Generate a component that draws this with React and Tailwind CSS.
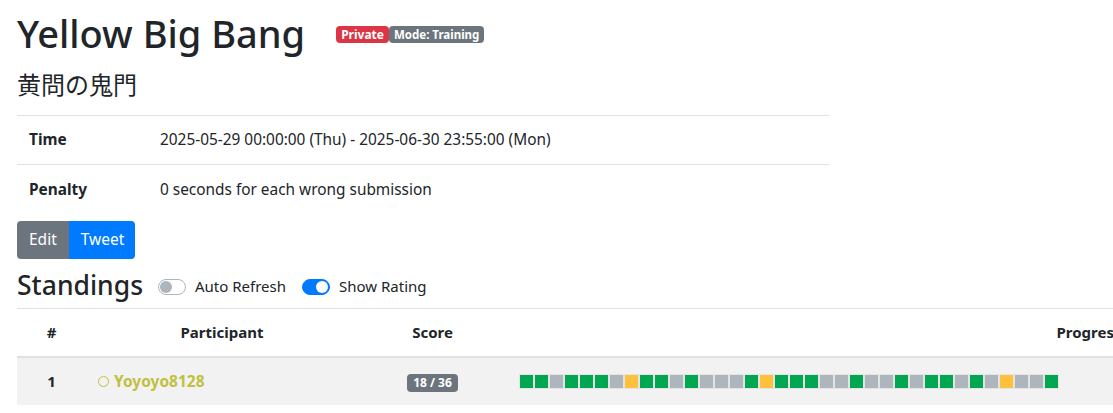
import React from 'react';

const progress = 'GGaGGGaYGGaGaaaGYGGGaaGaaGaGGaGaYaaG'.split('');

const squareColor = {
  G: 'bg-[#00a650]',
  a: 'bg-[#adb5bd]',
  Y: 'bg-[#fec03d]'
};

function Switch({ on, label }) {
  return (
    <label className="flex items-center gap-[9px] text-[15px] text-[#212529]">
      <span
        className={
          on
            ? 'relative w-[28px] h-[16px] rounded-full border border-[#007bff] bg-[#007bff]'
            : 'relative w-[28px] h-[16px] rounded-full border border-[#adb5bd] bg-white'
        }
      >
        <span
          className={
            on
              ? 'absolute top-[1px] left-[13px] w-[12px] h-[12px] rounded-full bg-white'
              : 'absolute top-[1px] left-[1px] w-[12px] h-[12px] rounded-full bg-[#adb5bd]'
          }
        />
      </span>
      {label}
    </label>
  );
}

export default function App() {
  return (
    <div className="w-[1113px] h-[413px] overflow-hidden bg-white text-[#212529] font-['Segoe_UI','Noto_Sans','Noto_Sans_CJK_JP',sans-serif]">
      <div className="px-[17px] pt-[9px]">
        <div className="flex items-center">
          <h1 className="text-[38px] font-medium leading-[48px]">Yellow Big Bang</h1>
          <div className="ml-[31px] mt-[3px] flex">
            <span className="px-[5px] h-[17px] leading-[17px] rounded-[4px] bg-[#dc3545] text-white text-[12px] font-bold">Private</span>
            <span className="px-[5px] h-[17px] leading-[17px] rounded-[4px] bg-[#6c757d] text-white text-[11.5px] font-bold">Mode: Training</span>
          </div>
        </div>
        <h4 className="mt-[12px] text-[24px] leading-[29px] font-normal font-['Noto_Sans_CJK_JP',sans-serif]">黄問の鬼門</h4>

        <table className="mt-[17px] w-[812px] text-[15.4px] border-collapse">
          <tbody>
            <tr className="border-t border-[#dee2e6]">
              <th className="w-[131px] px-[12px] h-[49px] text-left font-bold">Time</th>
              <td className="px-[12px] h-[49px]">2025-05-29 00:00:00 (Thu) - 2025-06-30 23:55:00 (Mon)</td>
            </tr>
            <tr className="border-t border-[#dee2e6]">
              <th className="w-[131px] px-[12px] h-[49px] text-left font-bold">Penalty</th>
              <td className="px-[12px] h-[49px]">0 seconds for each wrong submission</td>
            </tr>
          </tbody>
        </table>

        <div className="mt-[7px] flex">
          <button className="h-[38px] px-[12px] text-[15.5px] text-white bg-[#6c757d] rounded-l-[4px]">Edit</button>
          <button className="h-[38px] pl-[12px] pr-[11px] text-[15.5px] text-white bg-[#007bff] rounded-r-[4px]">Tweet</button>
        </div>

        <div className="mt-[9px] flex items-center gap-[15px]">
          <h3 className="text-[26.5px] font-medium leading-[34px]">Standings</h3>
          <div className="flex items-center gap-[16px] mt-[4px]">
            <Switch on={false} label="Auto Refresh" />
            <Switch on={true} label="Show Rating" />
          </div>
        </div>

        <table className="mt-[6px] w-[1654px] text-[15px] border-collapse">
          <thead>
            <tr className="border-t border-[#dee2e6] border-b-2">
              <th className="w-[69px] h-[49px] text-center font-bold">#</th>
              <th className="w-[272px] h-[49px] text-center font-bold">Participant</th>
              <th className="w-[149px] h-[49px] text-center font-bold">Score</th>
              <th className="h-[49px] text-center font-bold">Progress</th>
            </tr>
          </thead>
          <tbody>
            <tr className="bg-[#f2f2f2]">
              <td className="h-[48px] text-center font-bold">1</td>
              <td className="h-[48px] px-[12px]">
                <span className="flex items-center gap-[5px] text-[15.5px] text-[#c0c040] font-bold">
                  <span className="w-[11px] h-[11px] rounded-full border border-[#c0c040]" />
                  Yoyoyo8128
                </span>
              </td>
              <td className="h-[48px] text-center">
                <span className="inline-block px-[6px] h-[18px] leading-[18px] rounded-[4px] bg-[#6c757d] text-white text-[12px] font-bold">18 / 36</span>
              </td>
              <td className="h-[48px] px-[12px]">
                <div className="flex">
                  {progress.map((c, i) => (
                    <div key={i} className={`w-[15px] h-[15px] border border-[#e4e4e4] ${squareColor[c]}`} />
                  ))}
                </div>
              </td>
            </tr>
          </tbody>
        </table>
      </div>
    </div>
  );
}
